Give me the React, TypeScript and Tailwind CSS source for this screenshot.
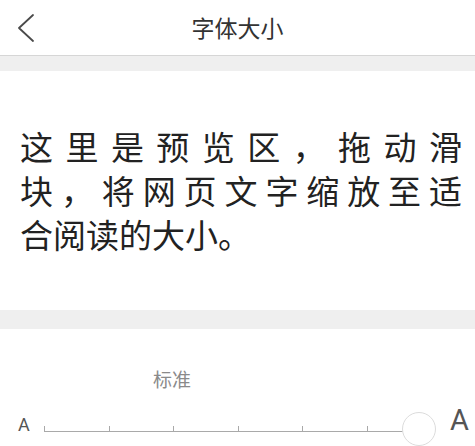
import { memo } from "react"

// ============================================================================
// DATA
// ============================================================================

const PREVIEW_LINES = ["这里是预览区，拖动滑", "块，将网页文字缩放至适", "合阅读的大小。"]
const TICK_COUNT = 6

const CJK = "font-['Noto_Sans_CJK_SC','Noto_Sans',sans-serif]"
const LATIN = "font-['Roboto','Noto_Sans',sans-serif]"

// ============================================================================
// COMPONENTS
// ============================================================================

function Header() {
  return (
    <header className="grid h-14 grid-cols-[56px_1fr_56px] items-center border-b border-[#d6d6d6] bg-white">
      <button type="button" className="flex h-full items-center pl-[17px]">
        <svg width="18" height="28" viewBox="0 0 18 28" fill="none">
          <polyline
            points="16,1 2,14 16,27"
            stroke="#4a4a4a"
            strokeWidth="1.8"
            strokeLinecap="round"
            strokeLinejoin="round"
          />
        </svg>
      </button>
      <h1 className={`${CJK} text-center text-[23px] leading-none text-[#333]`}>字体大小</h1>
      <div />
    </header>
  )
}

function Preview() {
  return (
    <section className={`${CJK} h-[239px] bg-white pl-5 pr-[13px] pt-[53px] text-[33px] leading-[44px] text-[#222]`}>
      {PREVIEW_LINES.map((line, i) => (
        <div
          key={line}
          className={i < PREVIEW_LINES.length - 1 ? "text-justify [text-align-last:justify]" : ""}
        >
          {line}
        </div>
      ))}
    </section>
  )
}

const FontSlider = memo(function FontSlider() {
  return (
    <section className="bg-white pt-[38px]">
      <div className={`${CJK} pl-[153px] text-[19px] leading-6 text-[#8a8a8a]`}>标准</div>

      <div className="mt-[18px] flex h-10 items-center pl-[18px]">
        <span className={`${LATIN} mb-[9px] w-[26px] text-[18px] leading-[18px] text-[#555]`}>A</span>

        {/* Track */}
        <div className="relative flex h-10 w-[375px] items-center">
          <div className="flex w-full items-end border-b-[1.5px] border-[#a9a9a9]">
            {Array.from({ length: TICK_COUNT }).map((_, i) => (
              <div key={i} className="h-[5px] w-[64.6px] shrink-0 border-l-[1.5px] border-[#a9a9a9]" />
            ))}
          </div>
          <div className="absolute right-[-17px] top-1/2 size-[34px] -translate-y-1/2 rounded-full border border-[#dcdcdc] bg-white" />
        </div>

        <span className={`${LATIN} mb-[18px] ml-[31px] text-[29px] leading-[29px] text-[#555]`}>A</span>
      </div>
    </section>
  )
})

// ============================================================================
// APP
// ============================================================================

export default function App() {
  return (
    <div className="h-[446px] w-[475px] overflow-hidden bg-white">
      <Header />
      <div className="h-[15px] bg-[#efefef]" />
      <Preview />
      <div className="h-[19px] bg-[#efefef]" />
      <FontSlider />
    </div>
  )
}
